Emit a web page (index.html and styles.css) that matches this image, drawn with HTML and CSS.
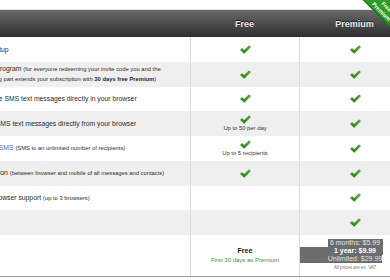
FILE: index.html
```html
<!DOCTYPE html>
<html>
<head>
    <title>Free vs Premium</title>
    <link rel="stylesheet" href="styles.css">
</head>
<body>
    <svg class="defs" width="0" height="0">
        <defs>
            <linearGradient id="tick" x1="0" y1="0" x2="0" y2="1">
                <stop offset="0" stop-color="#5cb336"/>
                <stop offset="1" stop-color="#2a7a17"/>
            </linearGradient>
            <symbol id="check" viewBox="0 0 11 9">
                <polygon points="0,5 2,3 4.2,5.1 9,0.2 11,2 4.2,8.8" fill="url(#tick)"/>
            </symbol>
        </defs>
    </svg>

    <div class="pricing">
        <div class="row head">
            <div class="label"></div>
            <div class="plan">Free</div>
            <div class="plan">Premium</div>
        </div>

        <div class="row">
            <div class="label"><span>App setup</span></div>
            <div class="cell"><svg class="tick"><use href="#check"/></svg></div>
            <div class="cell"><svg class="tick"><use href="#check"/></svg></div>
        </div>
        <div class="row alt">
            <div class="label"><span>Invite program <span class="note">(for everyone redeeming your invite code you and the<br>recruiting part extends your subscription with <b>30 days free Premium</b>)</span></span></div>
            <div class="cell"><svg class="tick"><use href="#check"/></svg></div>
            <div class="cell"><svg class="tick"><use href="#check"/></svg></div>
        </div>
        <div class="row">
            <div class="label"><span>Receive SMS text messages directly in your browser</span></div>
            <div class="cell"><svg class="tick"><use href="#check"/></svg></div>
            <div class="cell"><svg class="tick"><use href="#check"/></svg></div>
        </div>
        <div class="row alt">
            <div class="label"><span>Send SMS text messages directly from your browser</span></div>
            <div class="cell">
                <svg class="tick"><use href="#check"/></svg>
                <div class="limit">Up to 50 per day</div>
            </div>
            <div class="cell"><svg class="tick"><use href="#check"/></svg></div>
        </div>
        <div class="row">
            <div class="label"><span><a class="link" href="#">Group SMS</a> <span class="note">(SMS to an unlimited number of recipients)</span></span></div>
            <div class="cell">
                <svg class="tick"><use href="#check"/></svg>
                <div class="limit">Up to 5 recipients</div>
            </div>
            <div class="cell"><svg class="tick"><use href="#check"/></svg></div>
        </div>
        <div class="row alt">
            <div class="label"><span>Collection <span class="note">(between browser and mobile of all messages and contacts)</span></span></div>
            <div class="cell"><svg class="tick"><use href="#check"/></svg></div>
            <div class="cell"><svg class="tick"><use href="#check"/></svg></div>
        </div>
        <div class="row">
            <div class="label"><span>Multibrowser support <span class="note">(up to 3 browsers)</span></span></div>
            <div class="cell"></div>
            <div class="cell"><svg class="tick"><use href="#check"/></svg></div>
        </div>
        <div class="row alt">
            <div class="label"><span>No ads</span></div>
            <div class="cell"></div>
            <div class="cell"><svg class="tick"><use href="#check"/></svg></div>
        </div>

        <div class="row foot">
            <div class="label"></div>
            <div class="cell">
                <div class="price-free">Free</div>
                <div class="trial">First 30 days as Premium</div>
            </div>
            <div class="cell top">
                <div class="prices">
                    <div class="price sel-a">6 months: $5.99</div>
                    <div class="price sel-b best">1 year: $9.99</div>
                    <div class="price sel-c">Unlimited: $29.99</div>
                </div>
                <div class="vat">All prices are ex. VAT</div>
            </div>
        </div>
    </div>

    <div class="ribbon">
        <div>Free</div>
        <div>Premium</div>
    </div>
</body>
</html>
```

FILE: styles.css
```css
body {
    margin: 0;
    padding: 0;
    font-family: "Liberation Sans", Arial, sans-serif;
    color: #2b2b2b;
    background: #fff;
    overflow: hidden;
}

.defs {
    position: absolute;
    width: 0;
    height: 0;
}

.pricing {
    width: 440px;
    margin: 9px 0 0 -30px;
    border-top: 1px solid #e4e4e4;
    border-bottom: 1px solid #9c9c9c;
}

.row {
    display: grid;
    grid-template-columns: 220px 109px 111px;
    height: 24.75px;
    background-color: #fff;
}

.row.alt {
    background-color: #efefef;
}

.row .label {
    display: flex;
    align-items: center;
    padding-left: 8px;
    font-size: 6.8px;
    line-height: 9px;
    white-space: nowrap;
}

.row .cell {
    display: flex;
    flex-direction: column;
    align-items: center;
    justify-content: center;
    border-left: 1px solid #dcdcdc;
}

.note {
    font-size: 5.8px;
}

.link {
    color: #3a6fd8;
    text-decoration: none;
}

.tick {
    width: 11px;
    height: 9px;
}

.limit {
    font-size: 5.85px;
    line-height: 7px;
    margin-top: 1px;
    color: #333;
}

/* header bar */
.row.head {
    height: 27px;
    background: linear-gradient(#696969, #2e2e2e);
}

.head .plan {
    display: flex;
    align-items: center;
    justify-content: center;
    font-size: 9px;
    font-weight: bold;
    color: #e8e8e8;
    text-shadow: 0 -1px 0 rgba(0, 0, 0, 0.7);
}

/* footer with prices */
.row.foot {
    height: 41px;
}

.foot .cell.top {
    justify-content: flex-start;
    align-items: stretch;
    padding-top: 3.7px;
}

.price-free {
    font-size: 7px;
    font-weight: bold;
    line-height: 8px;
    color: #111;
}

.trial {
    font-size: 6px;
    line-height: 8px;
    margin-top: 1.5px;
    color: #35952a;
}

.price {
    font-size: 7px;
    line-height: 8.2px;
    text-align: center;
    color: #e2e2e2;
}

.price.best {
    font-weight: bold;
    color: #fff;
}

.sel-a {
    background: linear-gradient(to right, transparent 28px, #6d6d6d 28px, #6d6d6d 83px, transparent 83px);
}

.sel-b {
    background: linear-gradient(to right, #6d6d6d 83px, transparent 83px);
}

.sel-c {
    background: linear-gradient(to right, #6d6d6d 82px, transparent 82px);
}

.vat {
    font-size: 4.5px;
    line-height: 6px;
    margin-top: 1.5px;
    text-align: center;
    color: #777;
}

/* corner ribbon */
.ribbon {
    position: absolute;
    top: -2.2px;
    left: 350.2px;
    width: 70px;
    height: 20px;
    padding-top: 5px;
    box-sizing: border-box;
    transform: rotate(45deg);
    background-color: #2c9c27;
    border-bottom: 1px solid #1a6a14;
    color: #fff;
    font-size: 5.5px;
    font-weight: bold;
    line-height: 6.5px;
    text-align: center;
}
```
